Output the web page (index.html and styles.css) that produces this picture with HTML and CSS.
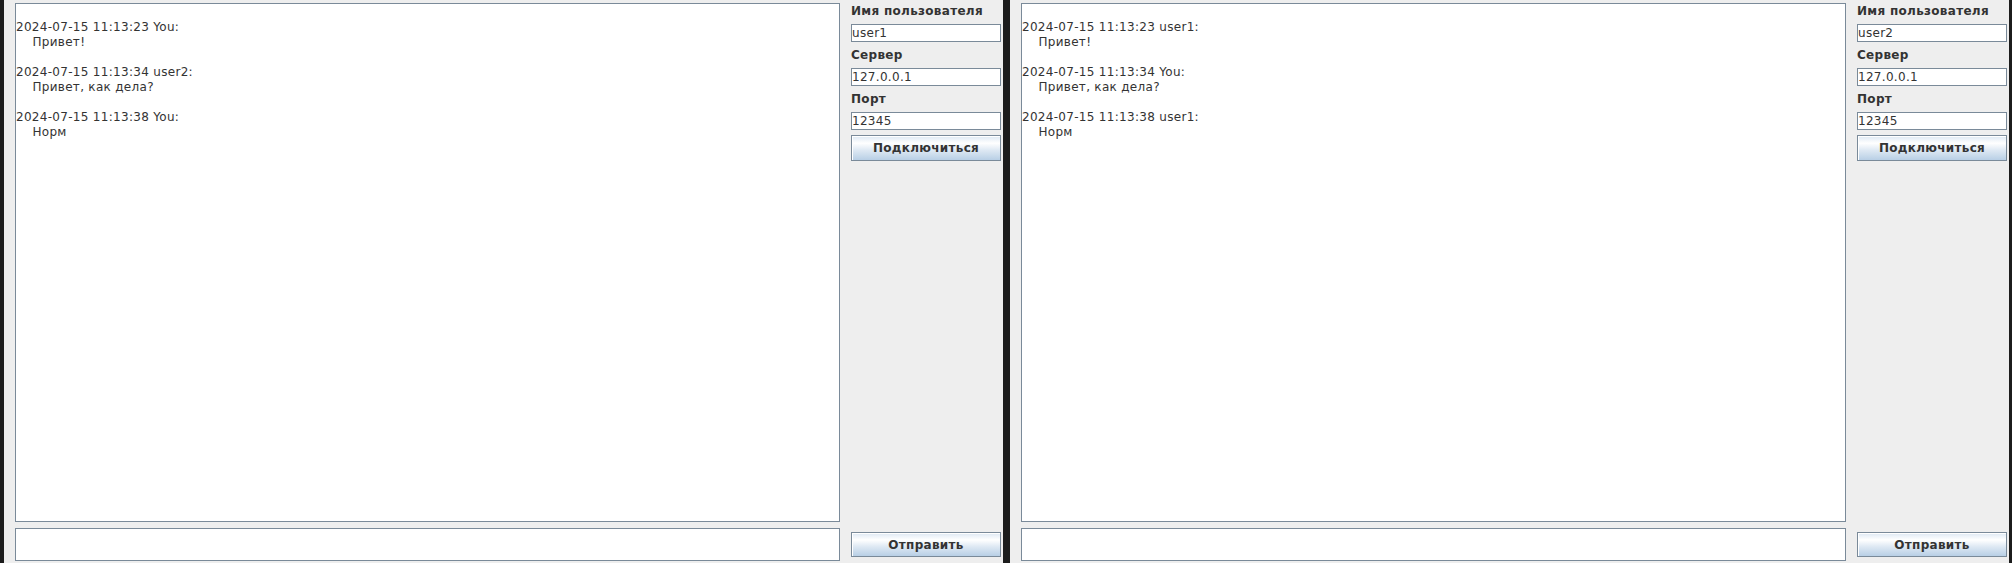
FILE: index.html
```html
<!DOCTYPE html>
<html lang="ru">
<head>
<meta charset="utf-8">
<title>Chat</title>
<link rel="stylesheet" href="styles.css">
</head>
<body>
<div class="desktop">
  <div class="window">
    <div class="chat">
2024-07-15 11:13:23 You:
    Привет!

2024-07-15 11:13:34 user2:
    Привет, как дела?

2024-07-15 11:13:38 You:
    Норм</div>
    <div class="panel">
      <div class="label">Имя пользователя</div>
      <input class="field" type="text" value="user1">
      <div class="label">Сервер</div>
      <input class="field" type="text" value="127.0.0.1">
      <div class="label">Порт</div>
      <input class="field" type="text" value="12345">
      <button class="btn connect">Подключиться</button>
    </div>
    <input class="message" type="text" value="">
    <div class="send-cell"><button class="btn send">Отправить</button></div>
  </div>
  <div class="window">
    <div class="chat">
2024-07-15 11:13:23 user1:
    Привет!

2024-07-15 11:13:34 You:
    Привет, как дела?

2024-07-15 11:13:38 user1:
    Норм</div>
    <div class="panel">
      <div class="label">Имя пользователя</div>
      <input class="field" type="text" value="user2">
      <div class="label">Сервер</div>
      <input class="field" type="text" value="127.0.0.1">
      <div class="label">Порт</div>
      <input class="field" type="text" value="12345">
      <button class="btn connect">Подключиться</button>
    </div>
    <input class="message" type="text" value="">
    <div class="send-cell"><button class="btn send">Отправить</button></div>
  </div>
</div>
</body>
</html>
```
FILE: styles.css
```css
* { box-sizing: border-box; }
html, body {
  margin: 0;
  padding: 0;
  background: #1c1c1c;
  width: 2012px;
  height: 563px;
  overflow: hidden;
  font-family: "DejaVu Sans", sans-serif;
  font-size: 12px;
}
.desktop {
  display: flex;
  gap: 7px;
  padding-left: 4px;
  height: 563px;
}
.window {
  width: 999px;
  height: 563px;
  background: #eeeeee;
  display: grid;
  grid-template-columns: 825px 150px;
  grid-template-rows: 1fr 33px;
  column-gap: 11px;
  row-gap: 6px;
  padding: 3px 2px 2px 11px;
}
.chat {
  background: #ffffff;
  border: 1px solid #7a8a99;
  white-space: pre;
  line-height: 15px;
  letter-spacing: 0.3px;
  color: #333333;
  padding: 1px 0 0 0;
  overflow: hidden;
}
.panel {
  display: flex;
  flex-direction: column;
  padding-top: 1px;
}
.label {
  font-weight: bold;
  color: #333333;
  line-height: 14px;
  height: 14px;
  letter-spacing: 0.3px;
  margin-bottom: 6px;
  white-space: nowrap;
}
.field {
  height: 18px;
  width: 150px;
  border: 1px solid #7a8a99;
  background: #ffffff;
  font-family: "DejaVu Sans", sans-serif;
  font-size: 12px;
  letter-spacing: 0.3px;
  color: #333333;
  padding: 0;
  margin: 0 0 6px 0;
  outline: none;
  line-height: 16px;
}
.btn {
  width: 150px;
  border: 1px solid #7a8a99;
  background: linear-gradient(#dde8f3 0%, #ffffff 30%, #dde8f3 60%, #b8cfe5 100%);
  font-family: "DejaVu Sans", sans-serif;
  font-size: 12px;
  font-weight: bold;
  letter-spacing: 0.3px;
  color: #333333;
  padding: 0;
  margin: 0;
  box-shadow: inset 1px 1px 0 #ffffff;
}
.connect {
  height: 26px;
  margin-top: -1px;
}
.message {
  height: 33px;
  width: 825px;
  border: 1px solid #7a8a99;
  background: #ffffff;
  margin: 0;
  padding: 0;
  outline: none;
  font-family: "DejaVu Sans", sans-serif;
  font-size: 12px;
}
.send-cell {
  display: flex;
  align-items: center;
}
.send {
  height: 25px;
}
```
